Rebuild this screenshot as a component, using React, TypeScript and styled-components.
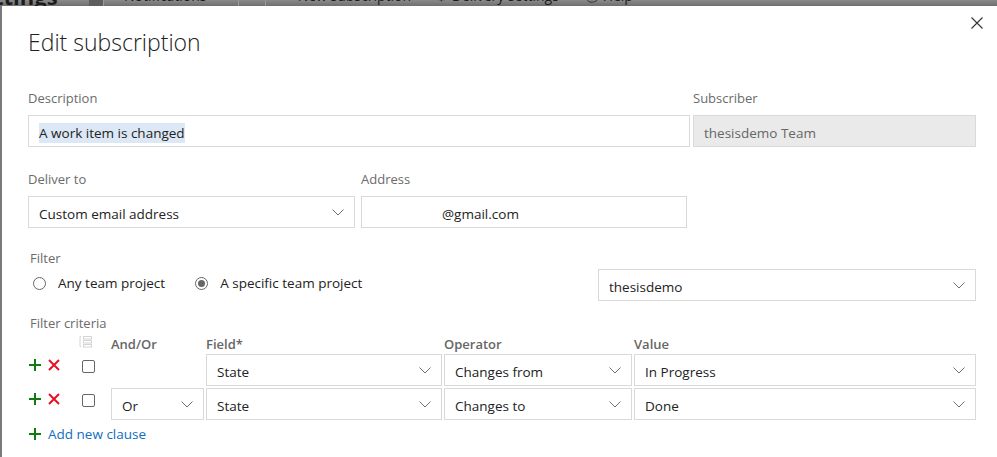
import React from 'react';
import styled, { createGlobalStyle } from 'styled-components';

const GlobalStyle = createGlobalStyle`
  html, body {
    margin: 0;
    padding: 0;
    background: #7b7b7b;
    font-family: "Open Sans", "Noto Sans", sans-serif;
  }
`;

const Page = styled.div`
  width: 997px;
  height: 457px;
  overflow: hidden;
  display: flex;
  flex-direction: column;
  background: #7b7b7b;
`;

const TopBar = styled.div`
  height: 6px;
  flex: none;
  overflow: hidden;
  background: linear-gradient(#8a8a8a, #6f6f6f);
`;

const TopBarInner = styled.div`
  display: flex;
  align-items: flex-end;
  height: 20px;
  margin-top: -14px;
  color: #1c1c1c;
  font-size: 14px;
  white-space: nowrap;
`;

const TopHeading = styled.span`
  font-size: 22px;
  font-weight: 700;
  line-height: 20px;
  margin-left: -6px;
  width: 95px;
`;

const TopBlock = styled.span`
  width: 14px;
  height: 20px;
  background: #5e5e5e;
`;

const TopTab = styled.span<{ $w: number; $plain?: boolean }>`
  width: ${(p) => p.$w}px;
  padding-left: 20px;
  border-left: ${(p) => (p.$plain ? 'none' : '1px solid #9a9a9a')};
  height: 20px;
  line-height: 20px;
  box-sizing: border-box;
`;

const Dialog = styled.div`
  flex: 1;
  margin-left: 2px;
  background: #fff;
  padding: 20px 21px 0 26px;
  display: flex;
  flex-direction: column;
  position: relative;
`;

const CloseButton = styled.button`
  position: absolute;
  top: 9px;
  right: 12px;
  width: 16px;
  height: 16px;
  border: none;
  background: none;
  padding: 0;
  display: flex;
  align-items: center;
  justify-content: center;
`;

const Title = styled.h1`
  margin: 0;
  font-size: 23px;
  line-height: 32px;
  font-weight: 300;
  color: #222;
`;

const FieldGrid = styled.div<{ $cols: string; $gap: number; $top: number }>`
  display: grid;
  grid-template-columns: ${(p) => p.$cols};
  column-gap: ${(p) => p.$gap}px;
  margin-top: ${(p) => p.$top}px;
`;

const FieldBlock = styled.div`
  display: flex;
  flex-direction: column;
`;

const Label = styled.div`
  font-size: 13px;
  line-height: 18px;
  color: #6b6b6b;
  margin-bottom: 8px;
`;

const Box = styled.div<{ $disabled?: boolean; $indent?: number }>`
  height: 32px;
  box-sizing: border-box;
  border: 1px solid #d9d9d9;
  background: ${(p) => (p.$disabled ? '#eaeaea' : '#fff')};
  color: ${(p) => (p.$disabled ? '#666' : '#222')};
  font-size: 13.5px;
  line-height: 18px;
  display: flex;
  align-items: flex-start;
  padding: 8px 10px 0 ${(p) => p.$indent ?? 10}px;
  justify-content: space-between;
  white-space: nowrap;
  overflow: hidden;
`;

const Selected = styled.span`
  background: #dce8f5;
  padding: 1px 0;
`;

const ChevronSvg = styled.svg`
  flex: none;
  margin-top: 4px;
`;

const Chevron = () => (
  <ChevronSvg width="12" height="7" viewBox="0 0 12 7">
    <polyline points="0.5,0.5 6,6 11.5,0.5" fill="none" stroke="#707070" strokeWidth="1" />
  </ChevronSvg>
);

const Select: React.FC<{ value: string }> = ({ value }) => (
  <Box>
    <span>{value}</span>
    <Chevron />
  </Box>
);

const FilterHead = styled.div`
  display: flex;
  justify-content: space-between;
  align-items: flex-start;
  margin-top: 21px;
`;

const FilterLeft = styled.div`
  display: flex;
  flex-direction: column;
  padding-left: 2px;
`;

const RadioRow = styled.div`
  display: flex;
  gap: 27px;
  margin-top: 7px;
`;

const RadioOption = styled.label`
  display: flex;
  align-items: center;
  gap: 12px;
  font-size: 13.5px;
  line-height: 19px;
  color: #222;
  padding-left: 3px;
`;

const RadioCircle = styled.span<{ $checked?: boolean }>`
  width: 11px;
  height: 11px;
  border-radius: 50%;
  border: 1px solid #666;
  display: flex;
  align-items: center;
  justify-content: center;
  &::after {
    content: '';
    width: 7px;
    height: 7px;
    border-radius: 50%;
    background: ${(p) => (p.$checked ? '#666' : 'transparent')};
  }
`;

const ProjectBox = styled.div`
  width: 378px;
  margin-top: 20px;
`;

const CriteriaLabel = styled(Label)`
  margin: 13px 0 0 2px;
`;

const ClauseGrid = styled.div`
  display: grid;
  grid-template-columns: 81px 93px 236px 188px 342px;
  grid-template-rows: 20px 32px 32px;
  column-gap: 2px;
  row-gap: 2px;
`;

const HeadCell = styled.div`
  align-self: end;
  font-size: 13px;
  font-weight: 600;
  color: #666;
  line-height: 16px;
`;

const ListIconCell = styled.div`
  display: flex;
  padding: 3px 0 0 51px;
`;

const ActionCell = styled.div`
  display: flex;
  align-items: flex-start;
  padding-top: 5px;
  padding-left: 1px;
`;

const IconSlot = styled.span<{ $w: number }>`
  width: ${(p) => p.$w}px;
  display: flex;
  flex: none;
`;

const Checkbox = styled.span`
  width: 11px;
  height: 11px;
  border: 1px solid #666;
  border-radius: 2px;
  margin-top: 1px;
`;

const AddClause = styled.div`
  display: flex;
  align-items: center;
  gap: 7px;
  margin-top: 5px;
  padding-left: 1px;
  font-size: 13.5px;
  color: #106ebe;
`;

const PlusIcon = () => (
  <svg width="12" height="12" viewBox="0 0 12 12">
    <path d="M6 0v12M0 6h12" stroke="#107c10" strokeWidth="2" />
  </svg>
);

const CrossIcon = () => (
  <svg width="12" height="12" viewBox="0 0 12 12">
    <path d="M1 1l10 10M11 1L1 11" stroke="#e81123" strokeWidth="2" />
  </svg>
);

const ListIcon = () => (
  <svg width="14" height="13" viewBox="0 0 14 13">
    <path d="M2 1.5h-1v10h1" fill="none" stroke="#d4d4d4" strokeWidth="1" />
    <rect x="4.5" y="1.5" width="8" height="2.5" fill="none" stroke="#d4d4d4" />
    <rect x="4.5" y="5.5" width="8" height="2.5" fill="none" stroke="#d4d4d4" />
    <rect x="4.5" y="9.5" width="8" height="2.5" fill="none" stroke="#d4d4d4" />
  </svg>
);

const CloseIcon = () => (
  <svg width="12" height="12" viewBox="0 0 12 12">
    <path d="M0.5 0.5l11 11M11.5 0.5l-11 11" stroke="#333" strokeWidth="1.1" />
  </svg>
);

const Actions = () => (
  <ActionCell>
    <IconSlot $w={19}><PlusIcon /></IconSlot>
    <IconSlot $w={34}><CrossIcon /></IconSlot>
    <Checkbox />
  </ActionCell>
);

const clauses = [
  { andOr: '', field: 'State', op: 'Changes from', value: 'In Progress' },
  { andOr: 'Or', field: 'State', op: 'Changes to', value: 'Done' },
];

export default function App() {
  return (
    <>
      <GlobalStyle />
      <Page>
        <TopBar>
          <TopBarInner>
            <TopHeading>ttings</TopHeading>
            <TopBlock />
            <TopTab $w={135}>Notifications</TopTab>
            <TopTab $w={27}></TopTab>
            <TopTab $w={150}>+ New subscription</TopTab>
            <TopTab $w={150} $plain>⚙ Delivery settings</TopTab>
            <TopTab $w={80} $plain>ⓘ Help</TopTab>
          </TopBarInner>
        </TopBar>
        <Dialog>
          <CloseButton aria-label="Close">
            <CloseIcon />
          </CloseButton>
          <Title>Edit subscription</Title>

          <FieldGrid $cols="662px 283px" $gap={3} $top={31}>
            <FieldBlock>
              <Label>Description</Label>
              <Box>
                <span><Selected>A work item is changed</Selected></span>
              </Box>
            </FieldBlock>
            <FieldBlock>
              <Label>Subscriber</Label>
              <Box $disabled>thesisdemo Team</Box>
            </FieldBlock>
          </FieldGrid>

          <FieldGrid $cols="327px 326px" $gap={6} $top={23}>
            <FieldBlock>
              <Label>Deliver to</Label>
              <Select value="Custom email address" />
            </FieldBlock>
            <FieldBlock>
              <Label>Address</Label>
              <Box $indent={80}>@gmail.com</Box>
            </FieldBlock>
          </FieldGrid>

          <FilterHead>
            <FilterLeft>
              <Label style={{ marginBottom: 0 }}>Filter</Label>
              <RadioRow>
                <RadioOption>
                  <RadioCircle />
                  Any team project
                </RadioOption>
                <RadioOption>
                  <RadioCircle $checked />
                  A specific team project
                </RadioOption>
              </RadioRow>
            </FilterLeft>
            <ProjectBox>
              <Select value="thesisdemo" />
            </ProjectBox>
          </FilterHead>

          <CriteriaLabel>Filter criteria</CriteriaLabel>
          <ClauseGrid>
            <ListIconCell><ListIcon /></ListIconCell>
            <HeadCell>And/Or</HeadCell>
            <HeadCell>Field*</HeadCell>
            <HeadCell>Operator</HeadCell>
            <HeadCell>Value</HeadCell>
            {clauses.map((c, i) => (
              <React.Fragment key={i}>
                <Actions />
                {c.andOr ? <Select value={c.andOr} /> : <div />}
                <Select value={c.field} />
                <Select value={c.op} />
                <Select value={c.value} />
              </React.Fragment>
            ))}
          </ClauseGrid>
          <AddClause>
            <PlusIcon />
            Add new clause
          </AddClause>
        </Dialog>
      </Page>
    </>
  );
}
